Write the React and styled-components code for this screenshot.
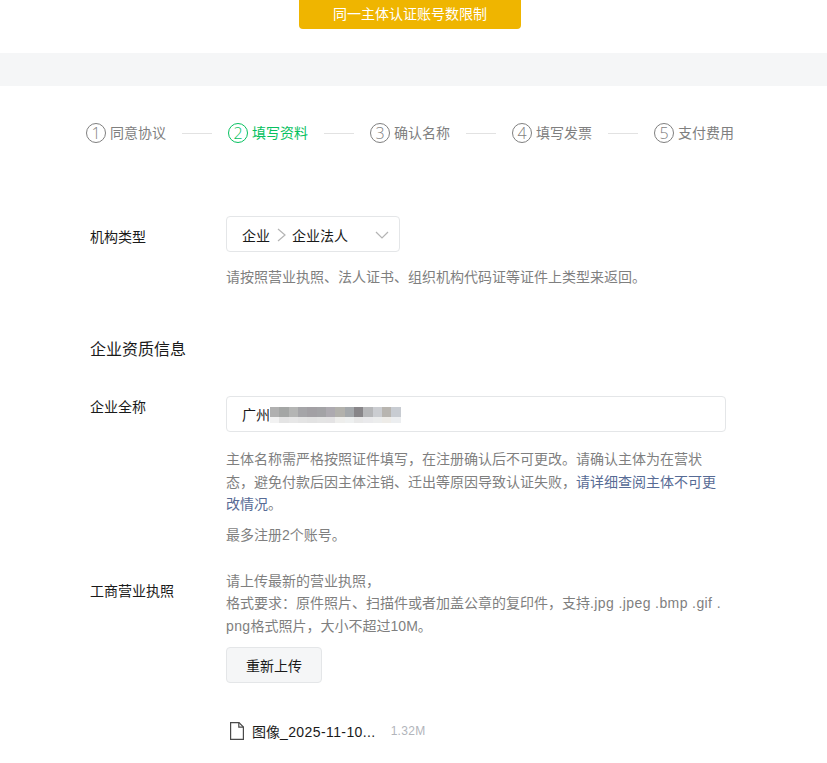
import styled, { createGlobalStyle } from "styled-components";

const GlobalStyle = createGlobalStyle`
    html, body {
        margin: 0;
        padding: 0;
        background: #fff;
        height: 763px;
        overflow: hidden;
    }
    body {
        font-family: "Liberation Sans", "Noto Sans CJK SC", sans-serif;
        font-size: 14px;
        color: #1a1a1a;
    }
`;

const Page = styled.div`
    width: 827px;
    display: flex;
    flex-direction: column;
`;

const TopArea = styled.div`
    height: 53px;
    padding-left: 299px;
`;
const LimitButton = styled.button`
    display: block;
    width: 222px;
    height: 29px;
    padding: 0 0 3px;
    border: 0;
    border-radius: 0 0 4px 4px;
    background: #efb500;
    color: #fff;
    font: inherit;
`;
const GreyBand = styled.div`
    height: 33px;
    background: #f5f6f7;
`;

const Steps = styled.ol`
    list-style: none;
    margin: 37px 0 0;
    padding: 0 0 0 86px;
    display: flex;
    height: 20px;
`;
const Step = styled.li`
    display: flex;
    align-items: center;
`;
const StepLabel = styled.span`
    display: flex;
    align-items: center;
    gap: 4px;
    line-height: 18px;
    color: ${(p) => (p.$active ? "#07c160" : "#7f7f7f")};
`;
const StepNumber = styled.span`
    box-sizing: border-box;
    width: 20px;
    height: 20px;
    border: 1px solid currentColor;
    border-radius: 50%;
    display: flex;
    align-items: center;
    justify-content: center;
    font-family: "Open Sans", sans-serif;
    font-size: 16px;
    font-weight: 300;
`;
const StepLine = styled.span`
    width: 30px;
    height: 1px;
    margin: 0 16px;
    background: #e2e2e2;
`;

const Form = styled.div`
    margin-top: 73px;
    display: flex;
    flex-direction: column;
`;
const Row = styled.div`
    display: grid;
    grid-template-columns: 136px 500px;
    padding-left: 90px;
    margin-top: ${(p) => p.$top || 0}px;
`;
const Label = styled.div`
    line-height: 20px;
    padding-top: ${(p) => p.$top || 0}px;
    color: #1a1a1a;
`;
const Field = styled.div`
    display: flex;
    flex-direction: column;
    align-items: flex-start;
`;

const Select = styled.div`
    box-sizing: border-box;
    width: 174px;
    height: 36px;
    padding: 2px 10px 0 15px;
    border: 1px solid #e4e6e8;
    border-radius: 4px;
    display: flex;
    align-items: center;
`;
const Crumb = styled.span`
    flex: none;
`;
const Chevron = styled.svg`
    flex: none;
    fill: none;
    stroke: #b4b4b4;
    stroke-width: 1.2;
    margin-left: ${(p) => (p.$end ? "auto" : 0)};
`;
const Hint = styled.p`
    margin: ${(p) => p.$top || 0}px 0 0;
    width: 500px;
    color: #7f7f7f;
    line-height: 22.4px;
`;
const Link = styled.span`
    color: #576b95;
`;
// latin runs sit a little wider in the reference than Liberation Sans does
const Latin = styled.span`
    letter-spacing: 0.4px;
`;

const SectionTitle = styled.h3`
    margin: 50px 0 0 90px;
    font-size: 16px;
    font-weight: 400;
    line-height: 24px;
    color: #1a1a1a;
`;

const NameInput = styled.div`
    box-sizing: border-box;
    width: 500px;
    height: 36px;
    padding: 0 15px;
    border: 1px solid #e4e6e8;
    border-radius: 4px;
    display: flex;
    align-items: center;
`;
const Mosaic = styled.span`
    display: flex;
    flex-direction: column;
    margin-top: 2px;
`;
const MosaicRow = styled.span`
    display: flex;
    height: ${(p) => p.$height}px;
`;
const MosaicCell = styled.span`
    width: 9.35px;
    height: 100%;
    background: ${(p) => p.$color};
`;

const UploadButton = styled.button`
    box-sizing: border-box;
    width: 96px;
    height: 36px;
    margin-top: 10px;
    border: 1px solid #e4e6e8;
    border-radius: 4px;
    background: #f5f6f7;
    color: #1a1a1a;
    font: inherit;
`;
const FileRow = styled.div`
    margin: 39px 0 0 4px;
    display: flex;
    align-items: center;
    height: 18px;
`;
const FileName = styled.span`
    margin-left: 8px;
    color: #1a1a1a;
`;
const FileSize = styled.span`
    margin-left: 15px;
    font-size: 12px;
    letter-spacing: 0.3px;
    color: #b2b5bb;
`;

const STEPS = ["同意协议", "填写资料", "确认名称", "填写发票", "支付费用"];
const MOSAIC_TOP = ["#b0b0b0", "#a4a6a5", "#b4b5b4", "#a5a5a8", "#a2a0a4", "#a3a3a6", "#adaab0", "#b2b1ac", "#a4a8ab", "#888689", "#b6b7b9", "#cbcdd1", "#b8b5b0", "#c8ccd2"];
const MOSAIC_BOTTOM = ["#f2f2f2", "#e4e4e4", "#e7e7e7", "#e4e4e4", "#e2e2e2", "#e4e4e4", "#e4e3e4", "#eeeeec", "#eef0f0", "#e8e8e8", "#eaeaec", "#eceded", "#eeece8", "#eceef0"];

export default function App() {
    return (
        <Page>
            <GlobalStyle />
            <TopArea>
                <LimitButton>同一主体认证账号数限制</LimitButton>
            </TopArea>
            <GreyBand />

            <Steps>
                {STEPS.map((name, i) => (
                    <Step key={name}>
                        <StepLabel $active={i === 1}>
                            <StepNumber>{i + 1}</StepNumber>
                            {name}
                        </StepLabel>
                        {i < STEPS.length - 1 && <StepLine />}
                    </Step>
                ))}
            </Steps>

            <Form>
                <Row>
                    <Label $top={11}>机构类型</Label>
                    <Field>
                        <Select>
                            <Crumb>企业</Crumb>
                            <Chevron width="22" height="14" viewBox="0 0 22 14">
                                <path d="M8 1 L15 7 L8 13" />
                            </Chevron>
                            <Crumb>企业法人</Crumb>
                            <Chevron $end width="14" height="14" viewBox="0 0 14 14">
                                <path d="M1 4 L7 10 L13 4" />
                            </Chevron>
                        </Select>
                        <Hint $top={14}>请按照营业执照、法人证书、组织机构代码证等证件上类型来返回。</Hint>
                    </Field>
                </Row>

                <SectionTitle>企业资质信息</SectionTitle>

                <Row $top={34}>
                    <Label $top={1}>企业全称</Label>
                    <Field>
                        <NameInput>
                            广州
                            <Mosaic>
                                <MosaicRow $height={10}>
                                    {MOSAIC_TOP.map((c, i) => <MosaicCell key={i} $color={c} />)}
                                </MosaicRow>
                                <MosaicRow $height={6}>
                                    {MOSAIC_BOTTOM.map((c, i) => <MosaicCell key={i} $color={c} />)}
                                </MosaicRow>
                            </Mosaic>
                        </NameInput>
                        <Hint $top={16}>
                            主体名称需严格按照证件填写，在注册确认后不可更改。请确认主体为在营状态，避免付款后因主体注销、迁出等原因导致认证失败，
                            <Link>请详细查阅主体不可更改情况</Link>。
                        </Hint>
                        <Hint $top={8}>最多注册2个账号。</Hint>
                    </Field>
                </Row>

                <Row $top={24}>
                    <Label $top={11}>工商营业执照</Label>
                    <Field>
                        <Hint>
                            请上传最新的营业执照，<br />
                            格式要求：原件照片、扫描件或者加盖公章的复印件，支持<Latin>.jpg .jpeg .bmp .gif .</Latin><br />
                            <Latin>png</Latin>格式照片，大小不超过10M。
                        </Hint>
                        <UploadButton>重新上传</UploadButton>
                        <FileRow>
                            <svg width="14" height="18" viewBox="0 0 14 18" fill="none" stroke="#4a4a4a" strokeWidth="1.2">
                                <path d="M0.6 0.6 H9 L13.4 5 V17.4 H0.6 Z" />
                                <path d="M8.8 0.6 V5.2 H13.4" />
                            </svg>
                            <FileName>图像<Latin>_2025-11-10...</Latin></FileName>
                            <FileSize>1.32M</FileSize>
                        </FileRow>
                    </Field>
                </Row>
            </Form>
        </Page>
    );
}
